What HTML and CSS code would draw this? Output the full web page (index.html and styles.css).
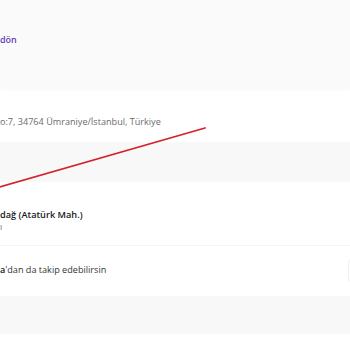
FILE: index.html
```html
<!DOCTYPE html>
<html lang="tr">
<head>
<meta charset="utf-8">
<link rel="stylesheet" href="styles.css">
</head>
<body>
<div class="page">
  <section class="top">
    <a class="back">dön</a>
  </section>
  <section class="address">
    <p class="addr-text">o:7, 34764 Ümraniye/İstanbul, Türkiye</p>
  </section>
  <section class="map"></section>
  <section class="store">
    <p class="store-name">dağ (Atatürk Mah.)</p>
    <p class="store-sub">ı</p>
  </section>
  <section class="track">
    <p class="track-text"><b>a</b>'dan da takip edebilirsin</p>
    <span class="track-btn"></span>
  </section>
  <section class="band"></section>
  <section class="rest"></section>
  <svg class="route" width="350" height="350" viewBox="0 0 350 350">
    <line x1="-2" y1="187.5" x2="205" y2="128" stroke="#d2232a" stroke-width="1.8" stroke-linecap="round"/>
  </svg>
</div>
</body>
</html>
```
FILE: styles.css
```css
html, body {
  margin: 0;
  padding: 0;
  background: #ffffff;
}
body {
  font-family: "Open Sans", "Noto Sans", sans-serif;
  font-size: 9.1px;
  color: #191919;
}
p { margin: 0; }
.page {
  position: relative;
  width: 350px;
  height: 350px;
  overflow: hidden;
}
.top {
  height: 88px;
  background: #fafafa;
  box-shadow: 0 1px 5px rgba(0, 0, 0, 0.04);
  position: relative;
  box-sizing: border-box;
  padding-top: 34px;
}
.back {
  color: #5d3ebc;
  font-weight: 600;
  font-size: 9px;
  line-height: 12px;
  display: block;
}
.address {
  height: 54px;
  box-sizing: border-box;
  padding-top: 28px;
  background: #fff;
}
.addr-text {
  color: #6b6b6b;
  font-size: 9.1px;
  line-height: 12px;
}
.map {
  height: 40px;
  background: #f8f8f8;
}
.store {
  height: 64px;
  box-sizing: border-box;
  padding-top: 27px;
  border-bottom: 1px solid #f4f4f4;
}
.store-name {
  font-weight: 600;
  font-size: 9.2px;
  line-height: 12px;
}
.store-sub {
  color: #777;
  font-size: 8.5px;
  line-height: 12px;
}
.track {
  height: 50px;
  box-sizing: border-box;
  padding-top: 18px;
  position: relative;
}
.track-text {
  font-size: 9.1px;
  line-height: 12px;
  color: #333;
}
.track-text b { font-weight: 600; color: #191919; }
.track-btn {
  position: absolute;
  right: -24px;
  top: 11px;
  width: 24px;
  height: 25px;
  border: 1px solid #f0f0f0;
  border-radius: 6px;
}
.band {
  height: 38px;
  background: #f8f8f8;
}
.rest {
  height: 16px;
  background: #fff;
}
.route {
  position: absolute;
  left: 0;
  top: 0;
  pointer-events: none;
}
```
